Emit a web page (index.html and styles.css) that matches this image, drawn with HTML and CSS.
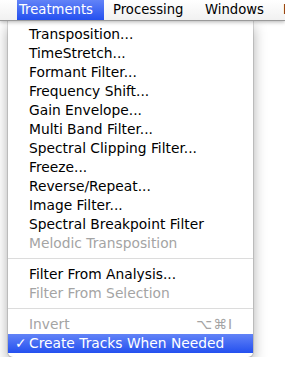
FILE: index.html
```html
<!DOCTYPE html>
<html lang="en">
<head>
    <meta charset="UTF-8">
    <title>Treatments Menu</title>
    <link rel="stylesheet" href="styles.css">
</head>
<body>
    <div class="menubar">
        <div class="title active">Treatments</div>
        <div class="title">Processing</div>
        <div class="title">Windows</div>
        <div class="title">Help</div>
    </div>
    <div class="menu">
        <div class="item">Transposition...</div>
        <div class="item">TimeStretch...</div>
        <div class="item">Formant Filter...</div>
        <div class="item">Frequency Shift...</div>
        <div class="item">Gain Envelope...</div>
        <div class="item">Multi Band Filter...</div>
        <div class="item">Spectral Clipping Filter...</div>
        <div class="item">Freeze...</div>
        <div class="item">Reverse/Repeat...</div>
        <div class="item">Image Filter...</div>
        <div class="item">Spectral Breakpoint Filter</div>
        <div class="item disabled">Melodic Transposition</div>
        <div class="separator"></div>
        <div class="item">Filter From Analysis...</div>
        <div class="item disabled">Filter From Selection</div>
        <div class="separator"></div>
        <div class="item disabled">Invert<span class="shortcut">⌥⌘I</span></div>
        <div class="item selected"><span class="check">✓</span>Create Tracks When Needed</div>
    </div>
</body>
</html>
```

FILE: styles.css
```css
body {
    margin: 0;
    background: #fff;
    font-family: "DejaVu Sans", sans-serif;
    font-size: 13.8px;
    color: #000;
    overflow: hidden;
}
.menubar {
    display: flex;
    height: 21px;
    font-size: 13.2px;
    background: linear-gradient(#ffffff, #f1f1f1);
    border-bottom: 1px solid #9a9a9a;
    box-shadow: 0 1px 4px rgba(0, 0, 0, 0.3);
    box-sizing: border-box;
    white-space: nowrap;
    position: relative;
    z-index: 1;
}
.title {
    flex: none;
    line-height: 20px;
    padding: 0 11px 0 9px;
}
.title:first-child {
    margin-left: 17px;
    width: 85px;
    padding: 0 0 0 2px;
}
.title:nth-child(2) {
    width: 72px;
}
.title:nth-child(3) {
    width: 58px;
}
.title.active {
    color: #fff;
    background: linear-gradient(#6283f7, #2450ef);
}
.menu {
    width: 245px;
    margin-left: 8px;
    padding: 4px 0;
    background: #fff;
    border-radius: 0 0 5px 5px;
    box-shadow: 0 0 0 1px rgba(0, 0, 0, 0.12), 0 6px 14px rgba(0, 0, 0, 0.35);
    box-sizing: border-box;
    position: relative;
}
.item {
    display: flex;
    height: 19px;
    line-height: 19px;
    padding: 0 20px 0 21px;
    white-space: nowrap;
    position: relative;
}
.item.disabled {
    color: #a4a4a4;
}
.item.selected {
    color: #fff;
    background: linear-gradient(#6283f7, #2450ef);
}
.shortcut {
    margin-left: auto;
    letter-spacing: 1px;
}
.check {
    position: absolute;
    left: 7px;
}
.separator {
    height: 1px;
    margin: 5px 0 6px;
    background: #dcdcdc;
}
```
